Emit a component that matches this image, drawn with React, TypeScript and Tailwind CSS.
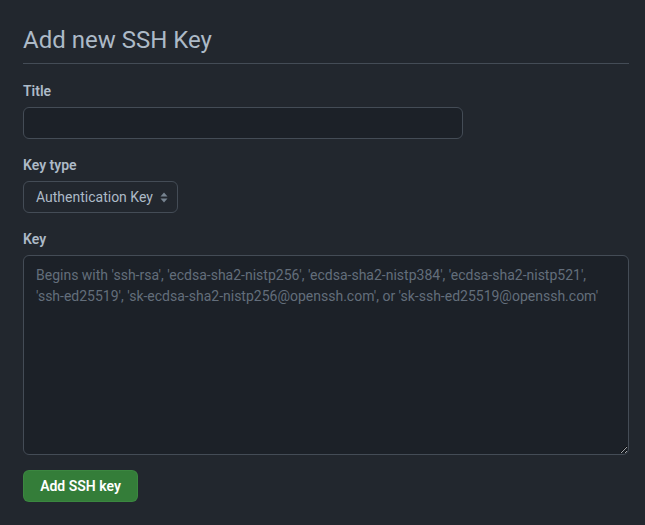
import React from 'react';

const App: React.FC = () => {
  return (
    <div
      className="min-h-[525px] w-full bg-[#22272e] text-[#adbac7] pl-[23px] pr-[16px] pt-[25px]"
      style={{ fontFamily: 'Roboto, "Noto Sans", sans-serif' }}
    >
      <h2 className="text-[24px] leading-[30px] font-normal pb-2 border-b border-[#444c56]">
        Add new SSH Key
      </h2>

      <form className="mt-[17px] flex flex-col" onSubmit={(e) => e.preventDefault()}>
        <label className="text-[14px] leading-[20px] font-semibold">Title</label>
        <input
          type="text"
          className="mt-[6px] w-[440px] h-[32px] rounded-md border border-[#444c56] bg-[#1c2128] px-3 text-[14px] outline-none"
        />

        <label className="mt-[16px] text-[14px] leading-[20px] font-semibold">Key type</label>
        <div className="mt-[6px] relative w-[155px] h-[32px] rounded-md border border-[#444c56] bg-[#22272e] flex items-center pl-3">
          <span className="text-[14px]">Authentication Key</span>
          <svg className="absolute right-[9px] top-[10px]" width="8" height="11" viewBox="0 0 8 11">
            <path d="M4 0.5 L7.5 4.5 H0.5 Z" fill="#768390" />
            <path d="M4 10.5 L7.5 6.5 H0.5 Z" fill="#768390" />
          </svg>
        </div>

        <label className="mt-[16px] text-[14px] leading-[20px] font-semibold">Key</label>
        <textarea
          className="mt-[6px] w-[606px] h-[200px] rounded-md border border-[#444c56] bg-[#1c2128] px-3 py-[9px] text-[14px] leading-[21px] text-[#adbac7] placeholder:text-[#636e7b] outline-none"
          placeholder="Begins with 'ssh-rsa', 'ecdsa-sha2-nistp256', 'ecdsa-sha2-nistp384', 'ecdsa-sha2-nistp521', 'ssh-ed25519', 'sk-ecdsa-sha2-nistp256@openssh.com', or 'sk-ssh-ed25519@openssh.com'"
        />

        <div className="mt-[15px]">
          <button
            type="submit"
            className="h-[32px] w-[115px] rounded-md bg-[#347d39] border border-[#46954a]/40 text-white text-[14px] font-semibold"
          >
            Add SSH key
          </button>
        </div>
      </form>
    </div>
  );
};

export default App;
